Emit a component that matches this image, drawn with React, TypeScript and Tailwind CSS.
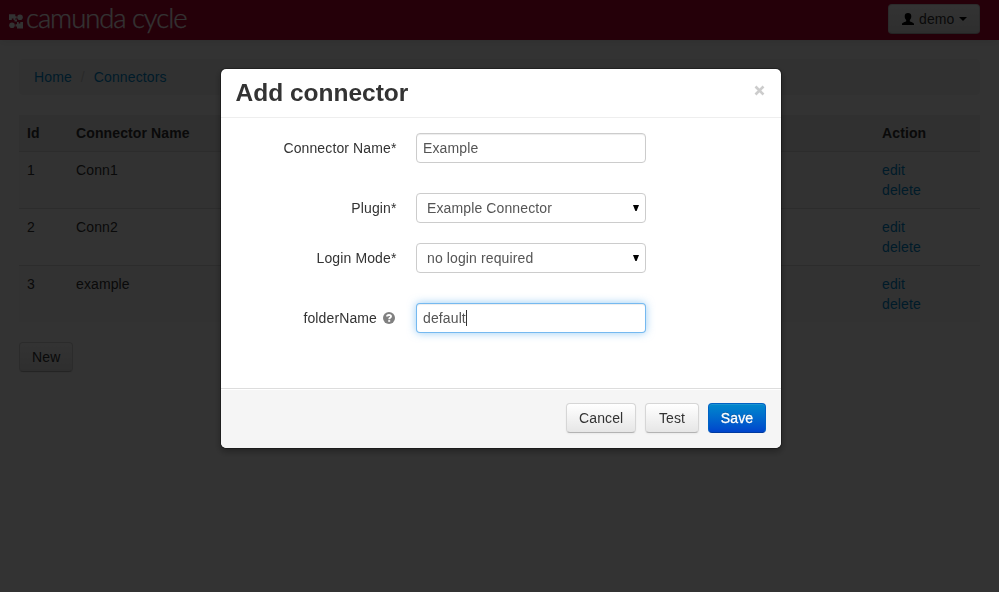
import React from "react";

const rows = [
  { id: "1", name: "Conn1" },
  { id: "2", name: "Conn2" },
  { id: "3", name: "example" },
];

const btn =
  "h-[30px] rounded border border-[#d6d6d6] border-b-[#b3b3b3] bg-linear-to-b from-white to-[#e6e6e6] px-3 text-[#333] shadow-[inset_0_1px_0_rgba(255,255,255,0.2),0_1px_2px_rgba(0,0,0,0.05)]";

function Logo() {
  return (
    <svg className="block overflow-visible" width="260" height="40" viewBox="0 0 260 40">
      <g fill="#f8f8f8">
        <path d="M9 14.300h6.300v2h1.400v2.200h-1.500v1.400h-1.700v-1.500h-1.700V20H9z" />
        <circle cx="20" cy="17.200" r="2.800" />
        <circle cx="12" cy="25.200" r="2.800" />
        <path d="M17 22h1.700v1.500h1.600V22H23v6.500h-6v-2h-1.500v-2.300H17z" />
        <path d="M14.500 19.500h2.500v2h-2.500z" />
      </g>
      <text
        x="26"
        y="28"
        textLength="161.500"
        fill="#fff"
        stroke="#fff"
        strokeWidth="0.250"
        className="font-['Lato',sans-serif] text-[27.5px] font-light tracking-normal"
      >
        camunda cycle
      </text>
    </svg>
  );
}

function Navbar() {
  return (
    <header className="flex h-10 items-center justify-between bg-[#bb0030] pr-[19px] shadow-[0_1px_10px_rgba(0,0,0,0.1)]">
      <Logo />
      <button className={`${btn} mb-0.5 flex w-[92px] items-center`}>
        <svg width="14" height="14" viewBox="0 0 14 14" className="shrink-0">
          <path
            d="M7 1c2.100 0 3.300 1.200 3.300 3.200C10.300 6 9.600 7.200 8.800 8v1.200c.5.900 4.200 1.100 4.200 2.800v1H1v-1c0-1.700 3.700-1.900 4.200-2.800V8C4.400 7.200 3.700 6 3.700 4.200 3.700 2.200 4.900 1 7 1z"
            fill="#000"
          />
        </svg>
        <span className="ml-1">demo</span>
        <span className="ml-1 border-x-4 border-t-4 border-x-transparent border-t-black" />
      </button>
    </header>
  );
}

function ConnectorTable() {
  return (
    <table className="w-full table-fixed border-collapse text-left">
      <colgroup>
        <col className="w-[49px]" />
        <col />
        <col className="w-[106px]" />
      </colgroup>
      <thead>
        <tr className="h-9 bg-[#eee]">
          <th className="px-2 py-0">Id</th>
          <th className="px-2 py-0">Connector Name</th>
          <th className="px-2 py-0">Action</th>
        </tr>
      </thead>
      <tbody>
        {rows.map((r) => (
          <tr key={r.id} className="h-[57px] border-t border-[#ddd] align-top odd:bg-[#f9f9f9]">
            <td className="p-2">{r.id}</td>
            <td className="p-2">{r.name}</td>
            <td className="p-2 text-[#0088cc]">
              <a className="block">edit</a>
              <a className="block">delete</a>
            </td>
          </tr>
        ))}
      </tbody>
    </table>
  );
}

function Field({ label, help, children }: { label: string; help?: boolean; children: React.ReactNode }) {
  return (
    <div className="flex h-[30px] items-center gap-[19.5px]">
      <label className="flex w-[160.5px] items-center justify-end">
        {label}
        {help && (
          <svg width="14" height="14" viewBox="0 0 14 14" className="mr-[0.5px] ml-[5px]">
            <circle cx="7" cy="7" r="6" fill="#808080" />
            <path d="M5 5.600C5 3.400 9 3.400 9 5.500 9 6.900 7.200 6.800 7.200 8.200" fill="none" stroke="#fff" strokeWidth="1.900" />
            <path d="M6.200 9.100h2v1.700h-2z" fill="#fff" />
          </svg>
        )}
      </label>
      {children}
    </div>
  );
}

const box = "flex h-[30px] w-[230px] items-center rounded border bg-white text-[#555]";

function SelectBox({ value }: { value: string }) {
  return (
    <div className={`${box} justify-between border-[#ccc] pr-[6px] pl-[10px]`}>
      {value}
      <svg width="6" height="6" viewBox="0 0 6 6">
        <path d="M0 0h6L3.600 6H2.400z" fill="#000" />
      </svg>
    </div>
  );
}

function ConnectorModal() {
  return (
    <div className="w-[562px] rounded-md border border-black/30 bg-white bg-clip-padding shadow-[0_3px_7px_rgba(0,0,0,0.3)]">
      <div className="flex h-[49px] justify-between border-b border-[#eee] pt-2 pr-4 pl-[14.5px]">
        <h3 className="text-[24.5px] leading-[31px] font-bold tracking-normal">Add connector</h3>
        <svg width="11" height="11" viewBox="0 0 11 11" className="mt-2">
          <path d="M1.500 1.500l8 8M9.500 1.500l-8 8" stroke="#ccc" strokeWidth="2.600" />
        </svg>
      </div>
      <div className="flex h-[270px] flex-col px-[15px] pt-[15px]">
        <Field label="Connector Name*">
          <div className={`${box} border-[#ccc] px-1.5 shadow-[inset_0_1px_1px_rgba(0,0,0,0.075)]`}>Example</div>
        </Field>
        <div className="mt-[30px]">
          <Field label="Plugin*">
            <SelectBox value="Example Connector" />
          </Field>
        </div>
        <div className="mt-5">
          <Field label="Login Mode*">
            <SelectBox value="no login required" />
          </Field>
        </div>
        <div className="mt-[30px]">
          <Field label="folderName" help>
            <div
              className={`${box} border-[rgba(82,168,236,0.8)] px-1.5 shadow-[inset_0_1px_1px_rgba(0,0,0,0.075),0_0_8px_rgba(82,168,236,0.6)]`}
            >
              default
              <span className="h-4 w-px bg-[#333]" />
            </div>
          </Field>
        </div>
      </div>
      <div className="flex h-[60px] justify-end gap-[9px] rounded-b-md border-t border-[#ddd] bg-[#f5f5f5] px-[15px] pt-[14px] shadow-[inset_0_1px_0_#fff]">
        <button className={`${btn} w-[70px]`}>Cancel</button>
        <button className={`${btn} w-[54px]`}>Test</button>
        <button className="h-[30px] w-[58px] rounded border border-[#0062c4] border-b-[#003ba0] bg-linear-to-b from-[#0088cc] to-[#0044cc] text-white shadow-[inset_0_1px_0_rgba(255,255,255,0.1)] [-webkit-text-stroke:0.3px_white] [text-shadow:0_-1px_0_rgba(0,0,0,0.25)]">
          Save
        </button>
      </div>
    </div>
  );
}

export default function App() {
  return (
    <div className="h-[592px] w-[999px] overflow-hidden bg-white font-['Liberation_Sans',Arial,sans-serif] text-[14px] leading-5 tracking-[0.12px] text-[#333]">
      <Navbar />
      <main className="px-[19px] pt-[19px]">
        <nav className="mb-5 flex h-9 items-center rounded bg-[#f5f5f5] px-[15px] text-[#0088cc]">
          <a>Home</a>
          <span className="w-[22px] text-center text-[#ccc]">/</span>
          <a>Connectors</a>
        </nav>
        <ConnectorTable />
        <button className={`${btn} mt-5 w-[54px]`}>New</button>
      </main>
      <div className="fixed inset-0 flex items-start justify-center bg-black/80 pt-[68px] pl-[3px]">
        <ConnectorModal />
      </div>
    </div>
  );
}
